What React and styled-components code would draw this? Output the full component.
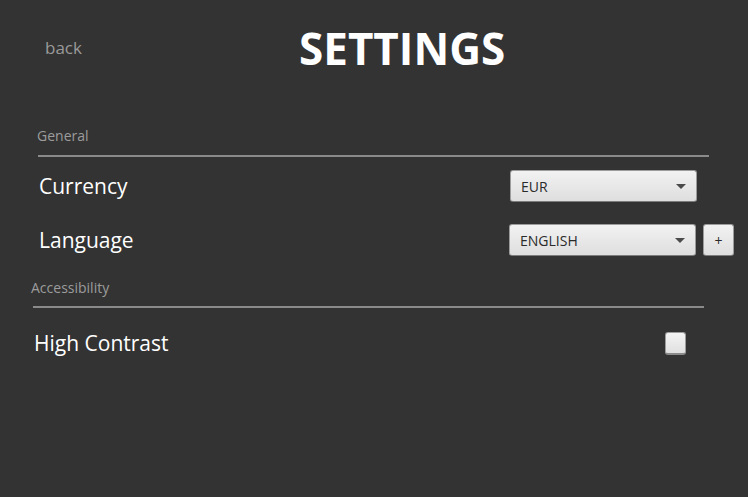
import styled, { createGlobalStyle } from "styled-components";

const GlobalStyle = createGlobalStyle`
  html, body {
    margin: 0;
    padding: 0;
    background: #333333;
  }
  body {
    font-family: "Open Sans", "Noto Sans", sans-serif;
  }
`;

const Page = styled.div`
  width: 748px;
  height: 497px;
  background: #333333;
  box-sizing: border-box;
  overflow: hidden;
`;

const Header = styled.div`
  display: flex;
  align-items: center;
  height: 96px;
  padding-left: 45px;
`;

const Back = styled.a`
  font-size: 17px;
  color: #9a9a9a;
  width: 254px;
  cursor: pointer;
  margin-top: -2px;
`;

const Title = styled.h1`
  margin: 0;
  font-size: 44px;
  font-weight: 700;
  color: #ffffff;
`;

const Section = styled.div`
  display: flex;
  flex-direction: column;
  padding-left: ${(p) => p.$left}px;
  width: ${(p) => p.$width}px;
  margin-top: ${(p) => p.$top}px;
`;

const SectionLabel = styled.div`
  font-size: 14px;
  color: #9c9c9c;
  margin-left: ${(p) => p.$shift || 0}px;
  line-height: 20px;
`;

const Rule = styled.div`
  height: 2px;
  background: #8a8a8a;
  margin-top: ${(p) => p.$above}px;
  margin-bottom: ${(p) => p.$below}px;
`;

const Row = styled.div`
  display: flex;
  align-items: center;
  height: 54px;
`;

const Label = styled.span`
  flex: 1;
  font-size: 21px;
  color: #ffffff;
  padding-left: 1px;
`;

const Select = styled.div`
  box-sizing: border-box;
  width: 187px;
  height: 32px;
  display: flex;
  align-items: center;
  justify-content: space-between;
  padding: 0 10px 0 10px;
  margin-right: ${(p) => (p.$withButton ? 0 : 12)}px;
  border: 1px solid #9c9c9c;
  border-bottom-color: #7c7c7c;
  border-radius: 3px;
  background: linear-gradient(#f2f2f2, #dedede);
  font-size: 14px;
  color: #2a2a2a;
  cursor: pointer;
`;

const Arrow = styled.span`
  width: 0;
  height: 0;
  border-left: 5px solid transparent;
  border-right: 5px solid transparent;
  border-top: 5px solid #4a4a4a;
`;

const SmallButton = styled.button`
  box-sizing: border-box;
  width: 31px;
  height: 32px;
  margin-left: 7px;
  margin-right: -25px;
  border: 1px solid #9c9c9c;
  border-bottom-color: #7c7c7c;
  border-radius: 3px;
  background: linear-gradient(#f2f2f2, #dedede);
  font-family: inherit;
  font-size: 14px;
  color: #2a2a2a;
  padding: 0;
  cursor: pointer;
`;

const Checkbox = styled.span`
  box-sizing: border-box;
  width: 21px;
  height: 23px;
  margin-right: 18px;
  border: 1px solid #9c9c9c;
  border-bottom: 2px solid #8a8a8a;
  border-radius: 3px;
  background: linear-gradient(#f4f4f4, #e0e0e0);
`;

export default function App() {
  return (
    <Page>
      <GlobalStyle />
      <Header>
        <Back>back</Back>
        <Title>SETTINGS</Title>
      </Header>
      <Section $left={38} $width={671} $top={30}>
        <SectionLabel $shift={-1}>General</SectionLabel>
        <Rule $above={9} $below={2} />
        <Row>
          <Label>Currency</Label>
          <Select>
            EUR <Arrow />
          </Select>
        </Row>
        <Row>
          <Label>Language</Label>
          <Select $withButton>
            ENGLISH <Arrow />
          </Select>
          <SmallButton>+</SmallButton>
        </Row>
      </Section>
      <Section $left={33} $width={671} $top={11}>
        <SectionLabel $shift={-2}>Accessibility</SectionLabel>
        <Rule $above={8} $below={8} />
        <Row>
          <Label>High Contrast</Label>
          <Checkbox />
        </Row>
      </Section>
    </Page>
  );
}
